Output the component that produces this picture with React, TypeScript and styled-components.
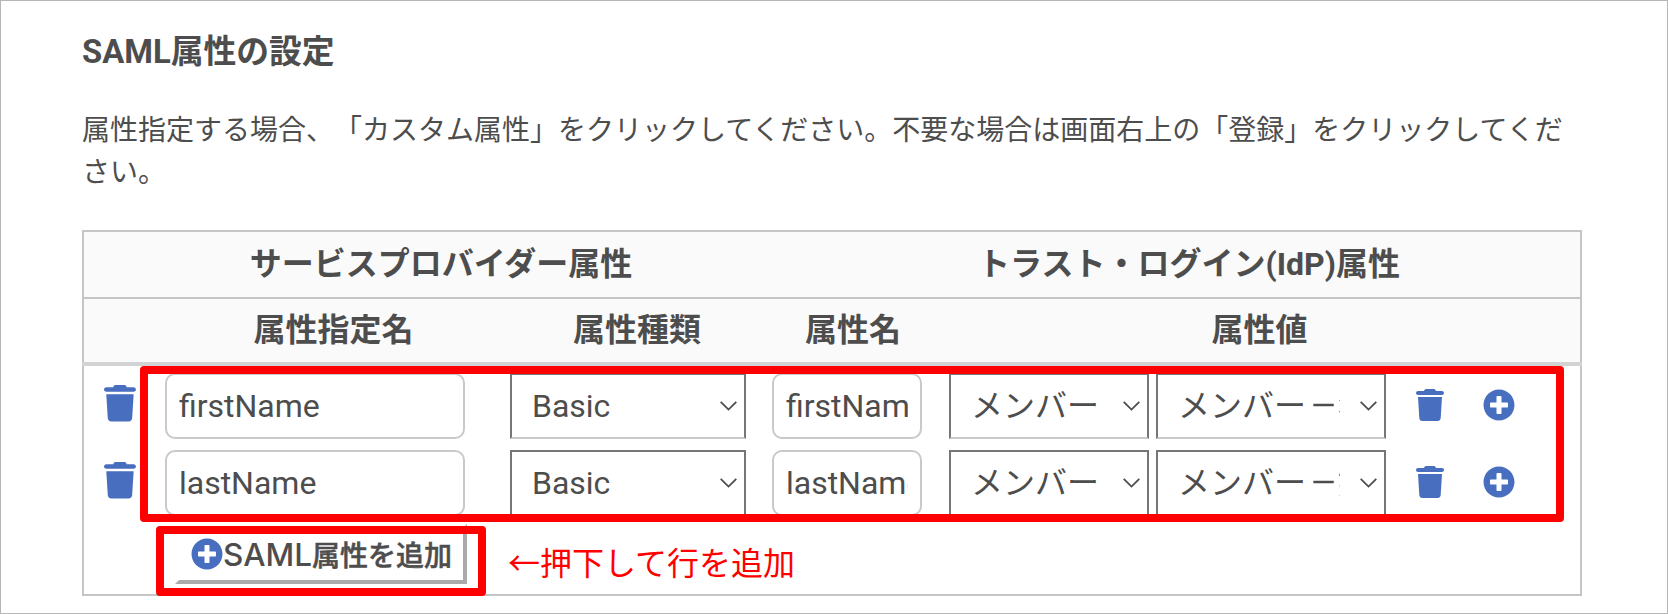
import React from "react";
import styled, { createGlobalStyle } from "styled-components";
import { FaTrash } from "react-icons/fa6";
import { FaPlusCircle } from "react-icons/fa";

const GlobalStyle = createGlobalStyle`
  * { box-sizing: border-box; }
  body { margin: 0; background: #fff; }
`;

const Page = styled.main`
  position: relative;
  width: 1668px;
  height: 614px;
  padding: 23px 85px 0 81px;
  border: 1px solid #b6b6b6;
  overflow: hidden;
  color: #4d4d4d;
  font-family: Roboto, "Noto Sans CJK JP", sans-serif;
  text-spacing-trim: space-all;
`;

const Title = styled.h2`
  margin: 0;
  font-size: 32.8px;
  line-height: 56px;
  font-weight: 700;
`;

const Description = styled.p`
  margin: 30px 0 0;
  width: 1500px;
  font-size: 28px;
  line-height: 42px;
  height: 120px;
`;

const Table = styled.section`
  width: 1500px;
  height: 366px;
  border: 2px solid #c5c5c5;
`;

const HeadGroup = styled.div`
  display: grid;
  grid-template-columns: 714px 782px;
  height: 67px;
  border-bottom: 2px solid #c5c5c5;
  background: #fafafa;
`;

const HeadRow = styled.div`
  display: grid;
  grid-template-columns: 71px 357px 250px 182px 631px;
  height: 67px;
  margin: 0 -2px;
  padding: 0 2px;
  border-bottom: 4px solid #d3d3d3;
  background: #fafafa;
  background-clip: content-box;
`;

const HeadCell = styled.div<{ $line?: number }>`
  font-size: 32px;
  font-weight: 700;
  line-height: ${(p) => p.$line ?? 62}px;
  text-align: center;
  white-space: nowrap;
`;

const Rows = styled.div`
  display: flex;
  flex-direction: column;
  gap: 11px;
  padding-top: 7px;
`;

const Row = styled.div`
  display: flex;
  align-items: center;
  height: 66px;
  padding-left: 20px;
`;

const IconButton = styled.button<{ $size: number; $gap: number; $lift?: number }>`
  display: flex;
  margin: 0 0 ${(p) => p.$lift ?? 0}px ${(p) => p.$gap}px;
  padding: 0;
  border: 0;
  background: none;
  color: #486fbf;
  font-size: ${(p) => p.$size}px;
`;

const TrashIcon = styled(FaTrash)`
  width: 0.875em;
  height: 1em;
`;

const TextField = styled.input<{ $width: number; $gap: number }>`
  width: ${(p) => p.$width}px;
  height: 66px;
  margin: 0 0 0 ${(p) => p.$gap}px;
  padding: 0 12px;
  border: 2px solid #c9c9c9;
  border-radius: 10px;
  outline: 0;
  background: #fff;
  color: inherit;
  font: 400 32px/62px Roboto, sans-serif;
`;

const SelectBox = styled.div<{ $width: number; $gap: number }>`
  display: flex;
  align-items: center;
  justify-content: space-between;
  width: ${(p) => p.$width}px;
  height: 66px;
  margin-left: ${(p) => p.$gap}px;
  padding: 0 7px 0 20px;
  border: 2px solid #767676;
  border-bottom-color: #c9c9c9;
`;

const SelectValue = styled.span<{ $clip: number }>`
  width: ${(p) => p.$clip}px;
  overflow: hidden;
  white-space: nowrap;
  font-size: 32px;
  line-height: 60px;
`;

const Dash = styled.span`
  display: inline-block;
  width: 32px;
  padding-left: 4px;
  font-size: 27px;
  line-height: 32px;
  vertical-align: 2px;
  -webkit-text-stroke: 0.7px currentColor;
`;

const Chevron = styled.svg`
  flex: none;
  width: 17px;
  height: 10px;
  fill: none;
  stroke: #4d4d4d;
  stroke-width: 1.8;
`;

const AddButton = styled.button`
  display: flex;
  align-items: center;
  width: 292px;
  height: 60px;
  margin: 8px 0 0 91px;
  padding: 0 0 0 12px;
  border: 4px solid;
  border-color: #fff #aaa #aaa #fff;
  background: #fff;
  color: inherit;
  font: 500 28px/52px Inter, "Noto Sans CJK JP", sans-serif;
  white-space: nowrap;
`;

const PlusIcon = styled(FaPlusCircle)`
  flex: none;
  color: #486fbf;
  font-size: 32px;
`;

const AddLabel = styled.span`
  padding-top: 3px;
  -webkit-text-stroke: 0.5px currentColor;
`;

const Latin = styled.span`
  font-size: 31.5px;
  -webkit-text-stroke: 0;
`;

const Highlight = styled.div<{ $x: number; $y: number; $w: number; $h: number }>`
  position: absolute;
  left: ${(p) => p.$x - 1}px;
  top: ${(p) => p.$y - 1}px;
  width: ${(p) => p.$w}px;
  height: ${(p) => p.$h}px;
  border: 8px solid #f00;
  border-radius: 4px;
  pointer-events: none;
`;

const Note = styled.div`
  position: absolute;
  left: 507px;
  top: 536px;
  color: #f00;
  font: 400 32px/48px "Noto Sans CJK JP", sans-serif;
  white-space: nowrap;
`;

type SelectProps = { children: React.ReactNode; width: number; gap: number; clip: number };

function Select({ children, width, gap, clip }: SelectProps) {
  return (
    <SelectBox $width={width} $gap={gap}>
      <SelectValue $clip={clip}>{children}</SelectValue>
      <Chevron viewBox="0 0 17 10">
        <path d="M0.7 0.8 8.5 8.6 16.3 0.8" />
      </Chevron>
    </SelectBox>
  );
}

const attributes = [
  { name: "firstName", kind: "Basic", source: "メンバー", field: "名" },
  { name: "lastName", kind: "Basic", source: "メンバー", field: "姓" },
];

export default function App() {
  return (
    <>
      <GlobalStyle />
      <Page lang="ja">
        <Title>SAML属性の設定</Title>
        <Description>
          属性指定する場合、「カスタム属性」をクリックしてください。不要な場合は画面右上の「登録」をクリックしてください。
        </Description>
        <Table>
          <HeadGroup>
            <HeadCell $line={64}>サービスプロバイダー属性</HeadCell>
            <HeadCell $line={64}>トラスト・ログイン(IdP)属性</HeadCell>
          </HeadGroup>
          <HeadRow>
            <HeadCell />
            <HeadCell>属性指定名</HeadCell>
            <HeadCell>属性種類</HeadCell>
            <HeadCell>属性名</HeadCell>
            <HeadCell>属性値</HeadCell>
          </HeadRow>
          <Rows>
            {attributes.map((a) => (
              <Row key={a.name}>
                <IconButton $size={36.5} $gap={0} $lift={5} aria-label="削除">
                  <TrashIcon />
                </IconButton>
                <TextField $width={300} $gap={29} defaultValue={a.name} />
                <Select width={236} gap={45} clip={170}>
                  {a.kind}
                </Select>
                <TextField $width={150} $gap={26} defaultValue={a.name} />
                <Select width={200} gap={27} clip={140}>
                  {a.source}
                </Select>
                <Select width={230} gap={7} clip={162}>
                  {a.source}
                  <Dash>－</Dash>
                  {a.field}
                </Select>
                <IconButton $size={32} $gap={30} $lift={2} aria-label="値を削除">
                  <TrashIcon />
                </IconButton>
                <IconButton $size={32} $gap={39} $lift={2} aria-label="値を追加">
                  <FaPlusCircle />
                </IconButton>
              </Row>
            ))}
          </Rows>
          <AddButton>
            <PlusIcon />
            <AddLabel>
              <Latin>SAML</Latin>属性を追加
            </AddLabel>
          </AddButton>
        </Table>
        <Highlight $x={140} $y={366} $w={1424} $h={156} />
        <Highlight $x={156} $y={526} $w={330} $h={70} />
        <Note>←押下して行を追加</Note>
      </Page>
    </>
  );
}
